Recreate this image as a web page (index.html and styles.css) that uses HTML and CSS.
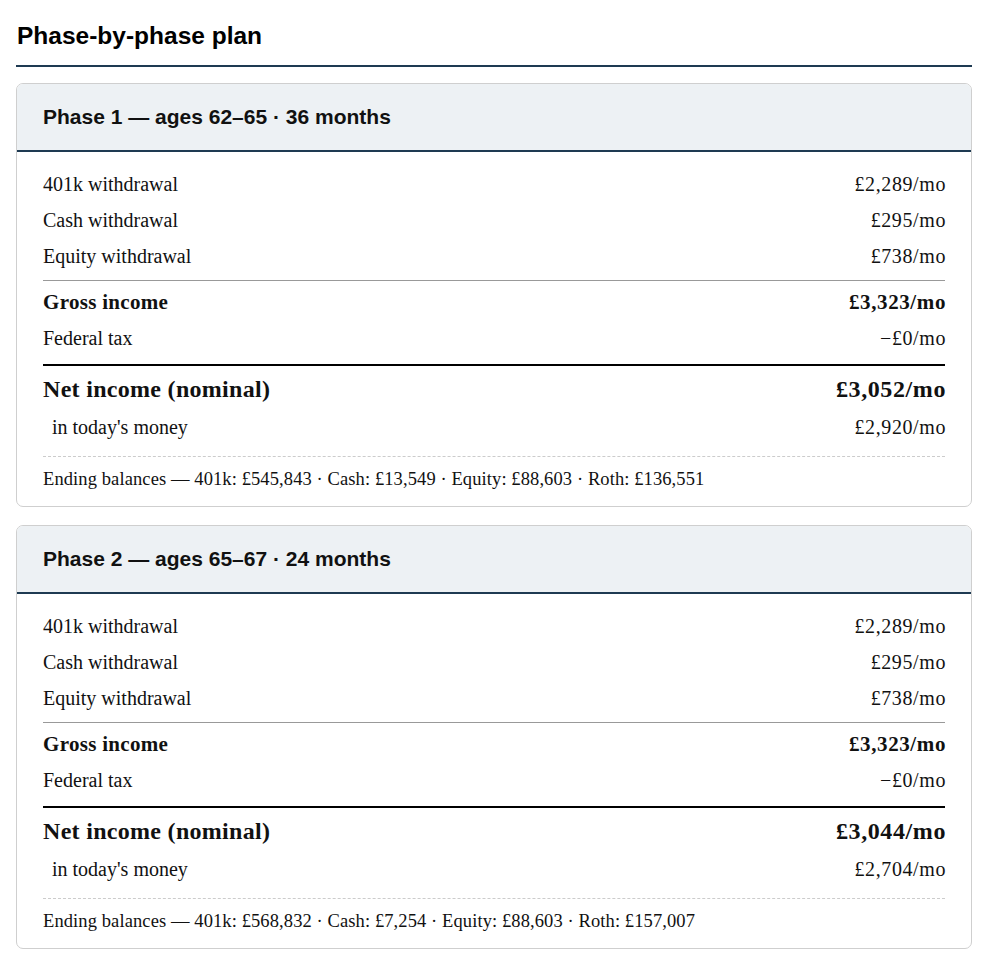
FILE: index.html
```html
<!DOCTYPE html>
<html>

<head>
    <title>Phase-by-phase plan</title>
    <link rel="stylesheet" href="styles.css">
</head>

<body>
    <h2 class="title">Phase-by-phase plan</h2>

    <div class="phase">
        <div class="phase-header">Phase 1 — ages 62–65 · 36 months</div>
        <div class="phase-body">
            <div class="row"><span>401k withdrawal</span><span>£2,289/mo</span></div>
            <div class="row"><span>Cash withdrawal</span><span>£295/mo</span></div>
            <div class="row"><span>Equity withdrawal</span><span>£738/mo</span></div>
            <div class="divider"></div>
            <div class="row bold"><span>Gross income</span><span>£3,323/mo</span></div>
            <div class="row"><span>Federal tax</span><span>−£0/mo</span></div>
            <div class="divider thick"></div>
            <div class="row net"><span>Net income (nominal)</span><span>£3,052/mo</span></div>
            <div class="row real"><span>in today's money</span><span>£2,920/mo</span></div>
            <div class="balances">Ending balances — 401k: £545,843 · Cash: £13,549 · Equity: £88,603 · Roth: £136,551</div>
        </div>
    </div>

    <div class="phase">
        <div class="phase-header">Phase 2 — ages 65–67 · 24 months</div>
        <div class="phase-body">
            <div class="row"><span>401k withdrawal</span><span>£2,289/mo</span></div>
            <div class="row"><span>Cash withdrawal</span><span>£295/mo</span></div>
            <div class="row"><span>Equity withdrawal</span><span>£738/mo</span></div>
            <div class="divider"></div>
            <div class="row bold"><span>Gross income</span><span>£3,323/mo</span></div>
            <div class="row"><span>Federal tax</span><span>−£0/mo</span></div>
            <div class="divider thick"></div>
            <div class="row net"><span>Net income (nominal)</span><span>£3,044/mo</span></div>
            <div class="row real"><span>in today's money</span><span>£2,704/mo</span></div>
            <div class="balances">Ending balances — 401k: £568,832 · Cash: £7,254 · Equity: £88,603 · Roth: £157,007</div>
        </div>
    </div>
</body>

</html>
```

FILE: styles.css
```css
body {
    margin: 0;
    padding: 0 15px 0 16px;
    font-family: "Liberation Serif", "DejaVu Serif", serif;
    font-size: 20px;
    color: #111;
    background: #fff;
}

.title {
    margin: 23px 0 16px;
    padding: 0 0 16px 1px;
    font-family: "Liberation Sans", Arial, sans-serif;
    font-size: 24.5px;
    line-height: 26px;
    font-weight: bold;
    color: #000;
    border-bottom: 2px solid #1e3a52;
}

.phase {
    margin-bottom: 18px;
    border: 1px solid #cfcfcf;
    border-radius: 7px;
    overflow: hidden;
}

.phase-header {
    height: 66px;
    padding: 0 26px;
    display: flex;
    align-items: center;
    background: #edf1f4;
    border-bottom: 2px solid #1e3a52;
    font-family: "Liberation Sans", Arial, sans-serif;
    font-size: 21px;
    font-weight: bold;
    color: #111;
}

.phase-body {
    padding: 14px 26px 0 26px;
}

.row {
    display: flex;
    justify-content: space-between;
    align-items: center;
    height: 36px;
}

.row span:last-child {
    letter-spacing: 0.6px;
    margin-right: -1px;
}

.bold {
    font-size: 21px;
    font-weight: bold;
    letter-spacing: 0.3px;
}

.divider {
    border-top: 1px solid #999;
    margin: 6px 0 3px;
}

.divider.thick {
    border-top: 2px solid #000;
    margin: 8px 0 4px;
}

.net {
    height: 39px;
    font-size: 24px;
    font-weight: bold;
    letter-spacing: 0.3px;
}

.real span:first-child {
    padding-left: 9px;
}

.balances {
    margin-top: 11px;
    padding: 12px 0 17px;
    border-top: 1px dashed #ccc;
    font-size: 18.5px;
    line-height: 20px;
    letter-spacing: 0.1px;
}
```
